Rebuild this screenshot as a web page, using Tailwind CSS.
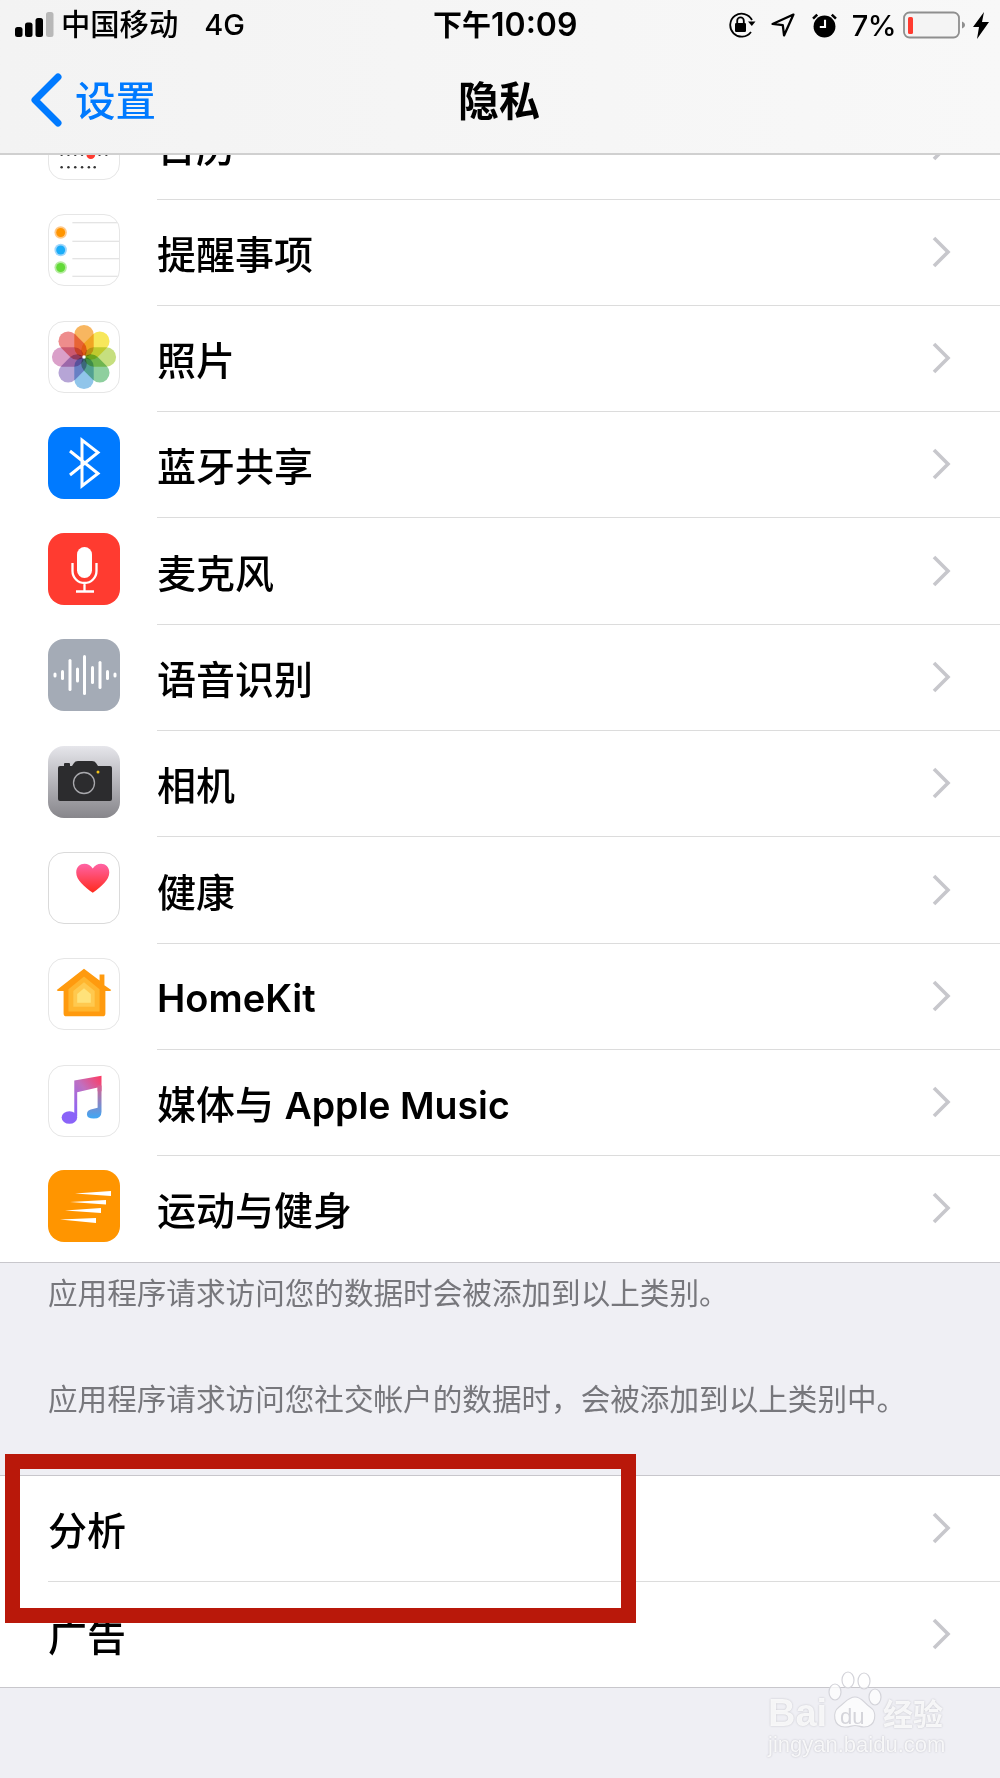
<!DOCTYPE html>
<html lang="zh-CN">
<head>
    <meta charset="UTF-8">
    <meta name="viewport" content="width=device-width, initial-scale=1.0">
    <title>隐私</title>
    <script src="https://cdn.jsdelivr.net/npm/@tailwindcss/browser@4"></script>
</head>
<body class="bg-[#efeff4] font-['Inter','Noto_Sans_CJK_SC',sans-serif] text-black">
<div class="relative w-[1000px] h-[1778px] overflow-hidden">

    <!-- Barra superior -->
    <header class="h-[155px] bg-gradient-to-r from-[#f3f3f3] to-[#f8f8f8] border-b-2 border-[#d0d0d0]">
        <div class="h-[50px] flex items-center">
            <div class="w-[433px] flex items-center pl-[15px]">
                <svg class="w-[39px] h-[26px]" viewBox="0 0 39 26"><rect x="0" y="15" width="7.5" height="10" rx="2.5" fill="#000"/><rect x="10" y="10.5" width="7.5" height="14.5" rx="2.5" fill="#000"/><rect x="20.5" y="6" width="7.5" height="19" rx="2.5" fill="#000"/><rect x="31" y="0" width="7.5" height="25" rx="2.5" fill="#b8b8b8"/></svg>
                <span class="ml-[7px] text-[29.3px] font-medium leading-none">中国移动</span>
                <span class="ml-[26px] text-[29px] font-medium leading-none">4G</span>
            </div>
            <div class="text-[29px] font-semibold leading-none whitespace-nowrap">下午<span class="text-[32px]">10:09</span></div>
            <div class="ml-auto flex items-center pr-[11px]">
                <svg class="w-[28px] h-[26px]" viewBox="0 0 28 26" fill="none"><path d="M24 8A11.5 11.5 0 1 0 23 20" stroke="#000" stroke-width="1.8"/><path d="M20 9.5h7.5l-3.7 4.5z" fill="#000"/><rect x="7" y="11" width="11" height="9" rx="1.2" fill="#000"/><path d="M9.2 11V8.7a3.3 3.3 0 0 1 6.6 0V11" stroke="#000" stroke-width="1.8"/></svg>
                <svg class="ml-[15px] w-[24px] h-[24px]" viewBox="0 0 23 23" fill="none"><path d="M21.5 1.5 1.5 10.5l9.8 1.2 1.2 9.8z" stroke="#000" stroke-width="2.2" stroke-linejoin="round"/></svg>
                <svg class="ml-[17px] w-[25px] h-[25px]" viewBox="0 0 24 24"><circle cx="12" cy="13" r="10.5" fill="#000"/><path d="M1 5.5 5 1.500M23 5.5l-4-4" stroke="#000" stroke-width="2.4"/><path d="M12.5 6.5v7H7.5" stroke="#fff" stroke-width="2" fill="none"/></svg>
                <span class="ml-[15px] text-[29px] font-medium leading-none tracking-[-0.5px]">7%</span>
                <svg class="ml-[7px] w-[63px] h-[28px]" viewBox="0 0 63 28" fill="none"><rect x="1" y="1.5" width="55" height="25" rx="5.5" fill="#f4f4f4" stroke="#8e8e8e" stroke-width="1.8"/><rect x="5" y="6" width="5" height="17" rx="1.5" fill="#ff3b30"/><path d="M59 10.5c2 .8 3 2 3 3.5s-1 2.700-3 3.500z" fill="#8e8e8e"/></svg>
                <svg class="ml-[7px] w-[16px] h-[27px]" viewBox="0 0 16 27"><path d="M11 0 0 15h6L4 27 16 10H9z" fill="#000"/></svg>
            </div>
        </div>
        <div class="relative h-[103px] flex items-center justify-center">
            <div class="absolute left-[30px] top-[23px] flex items-center">
                <svg class="w-[32px] h-[54px]" viewBox="0 0 32 54" fill="none"><path d="M28 4 5 27l23 23" stroke="#007aff" stroke-width="7" stroke-linecap="round" stroke-linejoin="round"/></svg>
                <span class="ml-[13px] mt-[4px] text-[40.5px] leading-none text-[#007aff] font-medium">设置</span>
            </div>
            <h1 class="text-[41px] leading-none font-semibold -mt-[1px] ml-[-2px]">隐私</h1>
        </div>
    </header>

    <main class="bg-white">
        <!-- Linha cortada pela barra -->
        <div class="h-[44.6px] overflow-hidden">
            <div class="h-[106.3px] -mt-[61.7px] pl-[48px] flex items-center">
                <div class="w-[72px] h-[72px] shrink-0 rounded-[16px] border border-[#e6e6e6] bg-white mb-[5px]">
                    <svg viewBox="0 0 72 72" class="w-full h-full"><g fill="#333"><circle cx="13" cy="47" r="1.300"/><circle cx="20" cy="47" r="1.300"/><circle cx="27" cy="47" r="1.300"/><circle cx="34" cy="47" r="1.300"/><circle cx="52" cy="47" r="1.300"/><circle cx="59" cy="47" r="1.300"/><circle cx="13" cy="60" r="1.300"/><circle cx="20" cy="60" r="1.300"/><circle cx="27" cy="60" r="1.300"/><circle cx="34" cy="60" r="1.300"/><circle cx="41" cy="60" r="1.300"/><circle cx="47" cy="60" r="1.300"/></g><circle cx="43" cy="47" r="4.500" fill="#ff3b30"/></svg>
                </div>
                <div class="ml-[37px] flex-1 h-full flex items-center justify-between pr-[49px] border-b border-[#dcdcdc]">
                    <span class="mt-[4px] text-[39px] font-medium leading-none">日历</span>
                    <svg class="w-[19px] h-[32px] mb-[1px]" viewBox="0 0 19 32" fill="none"><path d="M2 2l14 14L2 30" stroke="#c7c7cc" stroke-width="3.600"/></svg>
                </div>
            </div>
        </div>

        <!-- Permissões -->
        <div class="h-[106.3px] pl-[48px] flex items-center">
            <div class="w-[72px] h-[72px] shrink-0 rounded-[16px] border border-[#e6e6e6] bg-white mb-[5px] overflow-hidden">
                <svg viewBox="0 0 72 72" class="w-full h-full" fill="none"><path d="M24 8h48M24 27h48M24 45h48M24 63h48" stroke="#dcdcdc" stroke-width="1.200"/><circle cx="12" cy="18" r="6.400" fill="#ffc98a"/><circle cx="12" cy="18" r="4.600" fill="#ff9500"/><circle cx="12" cy="36" r="6.400" fill="#9fd6fb"/><circle cx="12" cy="36" r="4.600" fill="#1badf8"/><circle cx="12" cy="54" r="6.400" fill="#b6eba0"/><circle cx="12" cy="54" r="4.600" fill="#63da38"/></svg>
            </div>
            <div class="ml-[37px] flex-1 h-full flex items-center justify-between pr-[49px] border-b border-[#dcdcdc]">
                <span class="mt-[4px] text-[39px] font-medium leading-none">提醒事项</span>
                <svg class="w-[19px] h-[32px] mb-[1px]" viewBox="0 0 19 32" fill="none"><path d="M2 2l14 14L2 30" stroke="#c7c7cc" stroke-width="3.600"/></svg>
            </div>
        </div>

        <div class="h-[106.3px] pl-[48px] flex items-center">
            <div class="w-[72px] h-[72px] shrink-0 rounded-[16px] border border-[#e6e6e6] bg-white mb-[5px]">
                <svg viewBox="0 0 72 72" class="w-full h-full"><g fill-opacity="0.72" class="isolate"><rect class="mix-blend-multiply" x="26" y="3" width="20" height="33" rx="10" fill="#f59a23"/><rect class="mix-blend-multiply" x="26" y="3" width="20" height="33" rx="10" fill="#f4de1c" transform="rotate(45 36 36)"/><rect class="mix-blend-multiply" x="26" y="3" width="20" height="33" rx="10" fill="#b0d34e" transform="rotate(90 36 36)"/><rect class="mix-blend-multiply" x="26" y="3" width="20" height="33" rx="10" fill="#62bd78" transform="rotate(135 36 36)"/><rect class="mix-blend-multiply" x="26" y="3" width="20" height="33" rx="10" fill="#65afe2" transform="rotate(180 36 36)"/><rect class="mix-blend-multiply" x="26" y="3" width="20" height="33" rx="10" fill="#9a82c6" transform="rotate(225 36 36)"/><rect class="mix-blend-multiply" x="26" y="3" width="20" height="33" rx="10" fill="#cc7cb4" transform="rotate(270 36 36)"/><rect class="mix-blend-multiply" x="26" y="3" width="20" height="33" rx="10" fill="#e85f5f" transform="rotate(315 36 36)"/></g><circle cx="36" cy="36" r="1.800" fill="#fff"/></svg>
            </div>
            <div class="ml-[37px] flex-1 h-full flex items-center justify-between pr-[49px] border-b border-[#dcdcdc]">
                <span class="mt-[4px] text-[39px] font-medium leading-none">照片</span>
                <svg class="w-[19px] h-[32px] mb-[1px]" viewBox="0 0 19 32" fill="none"><path d="M2 2l14 14L2 30" stroke="#c7c7cc" stroke-width="3.600"/></svg>
            </div>
        </div>

        <div class="h-[106.3px] pl-[48px] flex items-center">
            <div class="w-[72px] h-[72px] shrink-0 rounded-[16px] bg-[#007aff] mb-[5px]">
                <svg viewBox="0 0 72 72" class="w-full h-full" fill="none"><path d="M22 24 50 46.500 34 59V13L50 25.500 22 48" stroke="#fff" stroke-width="3"/></svg>
            </div>
            <div class="ml-[37px] flex-1 h-full flex items-center justify-between pr-[49px] border-b border-[#dcdcdc]">
                <span class="mt-[4px] text-[39px] font-medium leading-none">蓝牙共享</span>
                <svg class="w-[19px] h-[32px] mb-[1px]" viewBox="0 0 19 32" fill="none"><path d="M2 2l14 14L2 30" stroke="#c7c7cc" stroke-width="3.600"/></svg>
            </div>
        </div>

        <div class="h-[106.3px] pl-[48px] flex items-center">
            <div class="w-[72px] h-[72px] shrink-0 rounded-[16px] bg-[#ff3b30] mb-[5px]">
                <svg viewBox="0 0 72 72" class="w-full h-full" fill="none"><rect x="29" y="14" width="15" height="31" rx="7.500" fill="#fff"/><path d="M24.500 30v8a12 12 0 0 0 24 0v-8M36.500 50v8M28 58.500h18" stroke="#fff" stroke-width="2.300"/></svg>
            </div>
            <div class="ml-[37px] flex-1 h-full flex items-center justify-between pr-[49px] border-b border-[#dcdcdc]">
                <span class="mt-[4px] text-[39px] font-medium leading-none">麦克风</span>
                <svg class="w-[19px] h-[32px] mb-[1px]" viewBox="0 0 19 32" fill="none"><path d="M2 2l14 14L2 30" stroke="#c7c7cc" stroke-width="3.600"/></svg>
            </div>
        </div>

        <div class="h-[106.3px] pl-[48px] flex items-center">
            <div class="w-[72px] h-[72px] shrink-0 rounded-[16px] bg-[#a4abb6] mb-[5px]">
                <svg viewBox="0 0 72 72" class="w-full h-full" fill="#fff"><rect x="5.500" y="33.500" width="3" height="5" rx="1.500"/><rect x="13" y="31" width="3" height="10" rx="1.500"/><rect x="20.500" y="20" width="3" height="32" rx="1.500"/><rect x="28" y="28.500" width="3" height="15" rx="1.500"/><rect x="35" y="16" width="3" height="40" rx="1.500"/><rect x="43" y="27" width="3" height="18" rx="1.500"/><rect x="50.500" y="22" width="3" height="28" rx="1.500"/><rect x="58" y="31" width="3" height="10" rx="1.500"/><rect x="65.500" y="33.500" width="3" height="5" rx="1.500"/></svg>
            </div>
            <div class="ml-[37px] flex-1 h-full flex items-center justify-between pr-[49px] border-b border-[#dcdcdc]">
                <span class="mt-[4px] text-[39px] font-medium leading-none">语音识别</span>
                <svg class="w-[19px] h-[32px] mb-[1px]" viewBox="0 0 19 32" fill="none"><path d="M2 2l14 14L2 30" stroke="#c7c7cc" stroke-width="3.600"/></svg>
            </div>
        </div>

        <div class="h-[106.3px] pl-[48px] flex items-center">
            <div class="w-[72px] h-[72px] shrink-0 rounded-[16px] bg-gradient-to-b from-[#e6e6eb] to-[#87868b] mb-[5px]">
                <svg viewBox="0 0 72 72" class="w-full h-full" fill="none"><rect x="16" y="17" width="6" height="4" rx="1" fill="#2c2c2e"/><path d="M12 20h12l2-3q1-2 4-2h14q3 0 4 2l2 3h12q2 0 2 2v31q0 2-2 2H12q-2 0-2-2V22q0-2 2-2z" fill="#2c2c2e"/><circle cx="36" cy="37" r="10.500" stroke="#a9a9ad" stroke-width="1.300"/><circle cx="50" cy="26" r="1.500" fill="#f5c518"/></svg>
            </div>
            <div class="ml-[37px] flex-1 h-full flex items-center justify-between pr-[49px] border-b border-[#dcdcdc]">
                <span class="mt-[4px] text-[39px] font-medium leading-none">相机</span>
                <svg class="w-[19px] h-[32px] mb-[1px]" viewBox="0 0 19 32" fill="none"><path d="M2 2l14 14L2 30" stroke="#c7c7cc" stroke-width="3.600"/></svg>
            </div>
        </div>

        <div class="h-[106.3px] pl-[48px] flex items-center">
            <div class="w-[72px] h-[72px] shrink-0 rounded-[16px] border border-[#dadada] bg-white mb-[5px]">
                <svg viewBox="0 0 72 72" class="w-full h-full"><defs><linearGradient id="coracao" x1="0" y1="0" x2="0" y2="1"><stop offset="0" stop-color="#ff63a5"/><stop offset="1" stop-color="#ff2a1c"/></linearGradient></defs><path d="M45 41C36 34 28 28 28 20c0-6 4-9 8.500-9 3.500 0 6.500 2 8.500 5 2-3 5-5 8.500-5C58 11 62 14 62 20c0 8-8 14-17 21z" fill="url(#coracao)"/></svg>
            </div>
            <div class="ml-[37px] flex-1 h-full flex items-center justify-between pr-[49px] border-b border-[#dcdcdc]">
                <span class="mt-[4px] text-[39px] font-medium leading-none">健康</span>
                <svg class="w-[19px] h-[32px] mb-[1px]" viewBox="0 0 19 32" fill="none"><path d="M2 2l14 14L2 30" stroke="#c7c7cc" stroke-width="3.600"/></svg>
            </div>
        </div>

        <div class="h-[106.3px] pl-[48px] flex items-center">
            <div class="w-[72px] h-[72px] shrink-0 rounded-[16px] border border-[#e6e6e6] bg-white mb-[5px]">
                <svg viewBox="0 0 72 72" class="w-full h-full"><path d="M36 10 52 22v-6h5v11l7 5-1 1H58v23q0 3-3 3H18q-3 0-3-3V33H9l-1-1z" fill="#ff9a0e"/><path d="M36 18 52 31v23H20V31z" fill="#ffb52e"/><path d="M36 24 47 33v16H25V33z" fill="#ffc94f"/><path d="M36 30 43 36v9H29v-9z" fill="#ffe27a"/></svg>
            </div>
            <div class="ml-[37px] flex-1 h-full flex items-center justify-between pr-[49px] border-b border-[#dcdcdc]">
                <span class="mt-[4px] text-[38px] font-semibold leading-none">HomeKit</span>
                <svg class="w-[19px] h-[32px] mb-[1px]" viewBox="0 0 19 32" fill="none"><path d="M2 2l14 14L2 30" stroke="#c7c7cc" stroke-width="3.600"/></svg>
            </div>
        </div>

        <div class="h-[106.3px] pl-[48px] flex items-center">
            <div class="w-[72px] h-[72px] shrink-0 rounded-[16px] border border-[#e6e6e6] bg-white mb-[5px]">
                <svg viewBox="0 0 72 72" class="w-full h-full"><defs><linearGradient id="musica" x1="0.9" y1="0" x2="0.1" y2="1"><stop offset="0" stop-color="#fa3e68"/><stop offset="0.45" stop-color="#c070c0"/><stop offset="1" stop-color="#8a63f8"/></linearGradient><linearGradient id="musica2" x1="0" y1="0" x2="0" y2="1"><stop offset="0" stop-color="#d9608f"/><stop offset="1" stop-color="#3ea8f5"/></linearGradient></defs><path d="M26 15 54 10V26H50V22L29 27V52H26z" fill="url(#musica)"/><path d="M50 20H54V47Q54 54 46 54 39 54 39 49.500 39 45 46 44 48 43.500 50 43z" fill="url(#musica2)"/><ellipse cx="21" cy="53" rx="8" ry="6.500" fill="#8a63f8"/></svg>
            </div>
            <div class="ml-[37px] flex-1 h-full flex items-center justify-between pr-[49px] border-b border-[#dcdcdc]">
                <span class="mt-[4px] text-[39px] font-medium leading-none whitespace-nowrap">媒体与 <span class="text-[37.5px] font-semibold">Apple Music</span></span>
                <svg class="w-[19px] h-[32px] mb-[1px]" viewBox="0 0 19 32" fill="none"><path d="M2 2l14 14L2 30" stroke="#c7c7cc" stroke-width="3.600"/></svg>
            </div>
        </div>

        <!-- Última linha com borda inteira -->
        <div class="h-[106.3px] pl-[48px] flex items-center border-b border-[#c8c7cc]">
            <div class="w-[72px] h-[72px] shrink-0 rounded-[16px] bg-[#ff9500] mb-[5px]">
                <svg viewBox="0 0 72 72" class="w-full h-full" fill="#fff"><path d="M27 23.500 63 21v5z"/><path d="M22 32 58 30v4.500z"/><path d="M17 40.500 53 38v5z"/><path d="M12 49.500 48 48v5z"/></svg>
            </div>
            <div class="ml-[37px] flex-1 h-full flex items-center justify-between pr-[49px]">
                <span class="mt-[4px] text-[39px] font-medium leading-none">运动与健身</span>
                <svg class="w-[19px] h-[32px] mb-[1px]" viewBox="0 0 19 32" fill="none"><path d="M2 2l14 14L2 30" stroke="#c7c7cc" stroke-width="3.600"/></svg>
            </div>
        </div>
    </main>

    <!-- Textos de rodapé -->
    <section class="h-[212px] pl-[48px] text-[29.6px] leading-none text-[#77777c]">
        <p class="pt-[16px]">应用程序请求访问您的数据时会被添加到以上类别。</p>
        <p class="pt-[77px]">应用程序请求访问您社交帐户的数据时，会被添加到以上类别中。</p>
    </section>

    <!-- Segundo grupo -->
    <section class="bg-white border-t border-b border-[#c8c7cc]">
        <div class="h-[106px] pl-[48px] flex items-center">
            <div class="flex-1 h-full flex items-center justify-between pr-[49px] border-b border-[#dcdcdc]">
                <span class="mt-[4px] text-[39px] font-medium leading-none">分析</span>
                <svg class="w-[19px] h-[32px] mb-[1px]" viewBox="0 0 19 32" fill="none"><path d="M2 2l14 14L2 30" stroke="#c7c7cc" stroke-width="3.600"/></svg>
            </div>
        </div>
        <div class="h-[105px] pl-[48px] pr-[49px] flex items-center justify-between">
            <span class="mt-[4px] text-[39px] font-medium leading-none">广告</span>
            <svg class="w-[19px] h-[32px] mb-[1px]" viewBox="0 0 19 32" fill="none"><path d="M2 2l14 14L2 30" stroke="#c7c7cc" stroke-width="3.600"/></svg>
        </div>
    </section>

    <!-- Marcação vermelha sobre a captura -->
    <div class="absolute left-[5px] top-[1454px] w-[631px] h-[169px] border-[15px] border-[#b9180a]"></div>

    <!-- Marca d'água -->
    <div class="absolute left-[768px] top-[1668px] w-[180px] h-[100px]">
        <svg class="absolute left-[55px] top-[0px] w-[70px] h-[62px]" viewBox="0 0 70 62" fill="#fff" fill-opacity="0.75" stroke="#d4d4da" stroke-width="1.200"><ellipse cx="12" cy="24" rx="6" ry="8"/><ellipse cx="25" cy="12" rx="6" ry="8"/><ellipse cx="41" cy="13" rx="6" ry="8"/><ellipse cx="52" cy="29" rx="6" ry="8"/><path d="M32 29c7 0 9 6 15 10 8 5 6 20-6 20-4 0-6-1.500-9-1.500S27 59 22 59c-12 0-13-15-6-20 6-4 9-10 16-10z"/></svg>
        <span class="absolute left-[0px] top-[26px] text-[38px] font-bold leading-none font-['Liberation_Sans',sans-serif] text-white/85 [text-shadow:0_0_2px_#bdbdc4]">Bai</span>
        <span class="absolute left-[72px] top-[38px] text-[22px] leading-none font-['Liberation_Sans',sans-serif] text-[#d4d4da]">du</span>
        <span class="absolute left-[115px] top-[31px] text-[30px] font-bold leading-none text-white/85 [text-shadow:0_0_2px_#bdbdc4]">经验</span>
        <span class="absolute left-[0px] top-[66px] text-[22px] leading-none whitespace-nowrap font-['Liberation_Sans',sans-serif] text-white/85 [text-shadow:0_0_2px_#b8b8c0]">jingyan.baidu.com</span>
    </div>
</div>
</body>
</html>
